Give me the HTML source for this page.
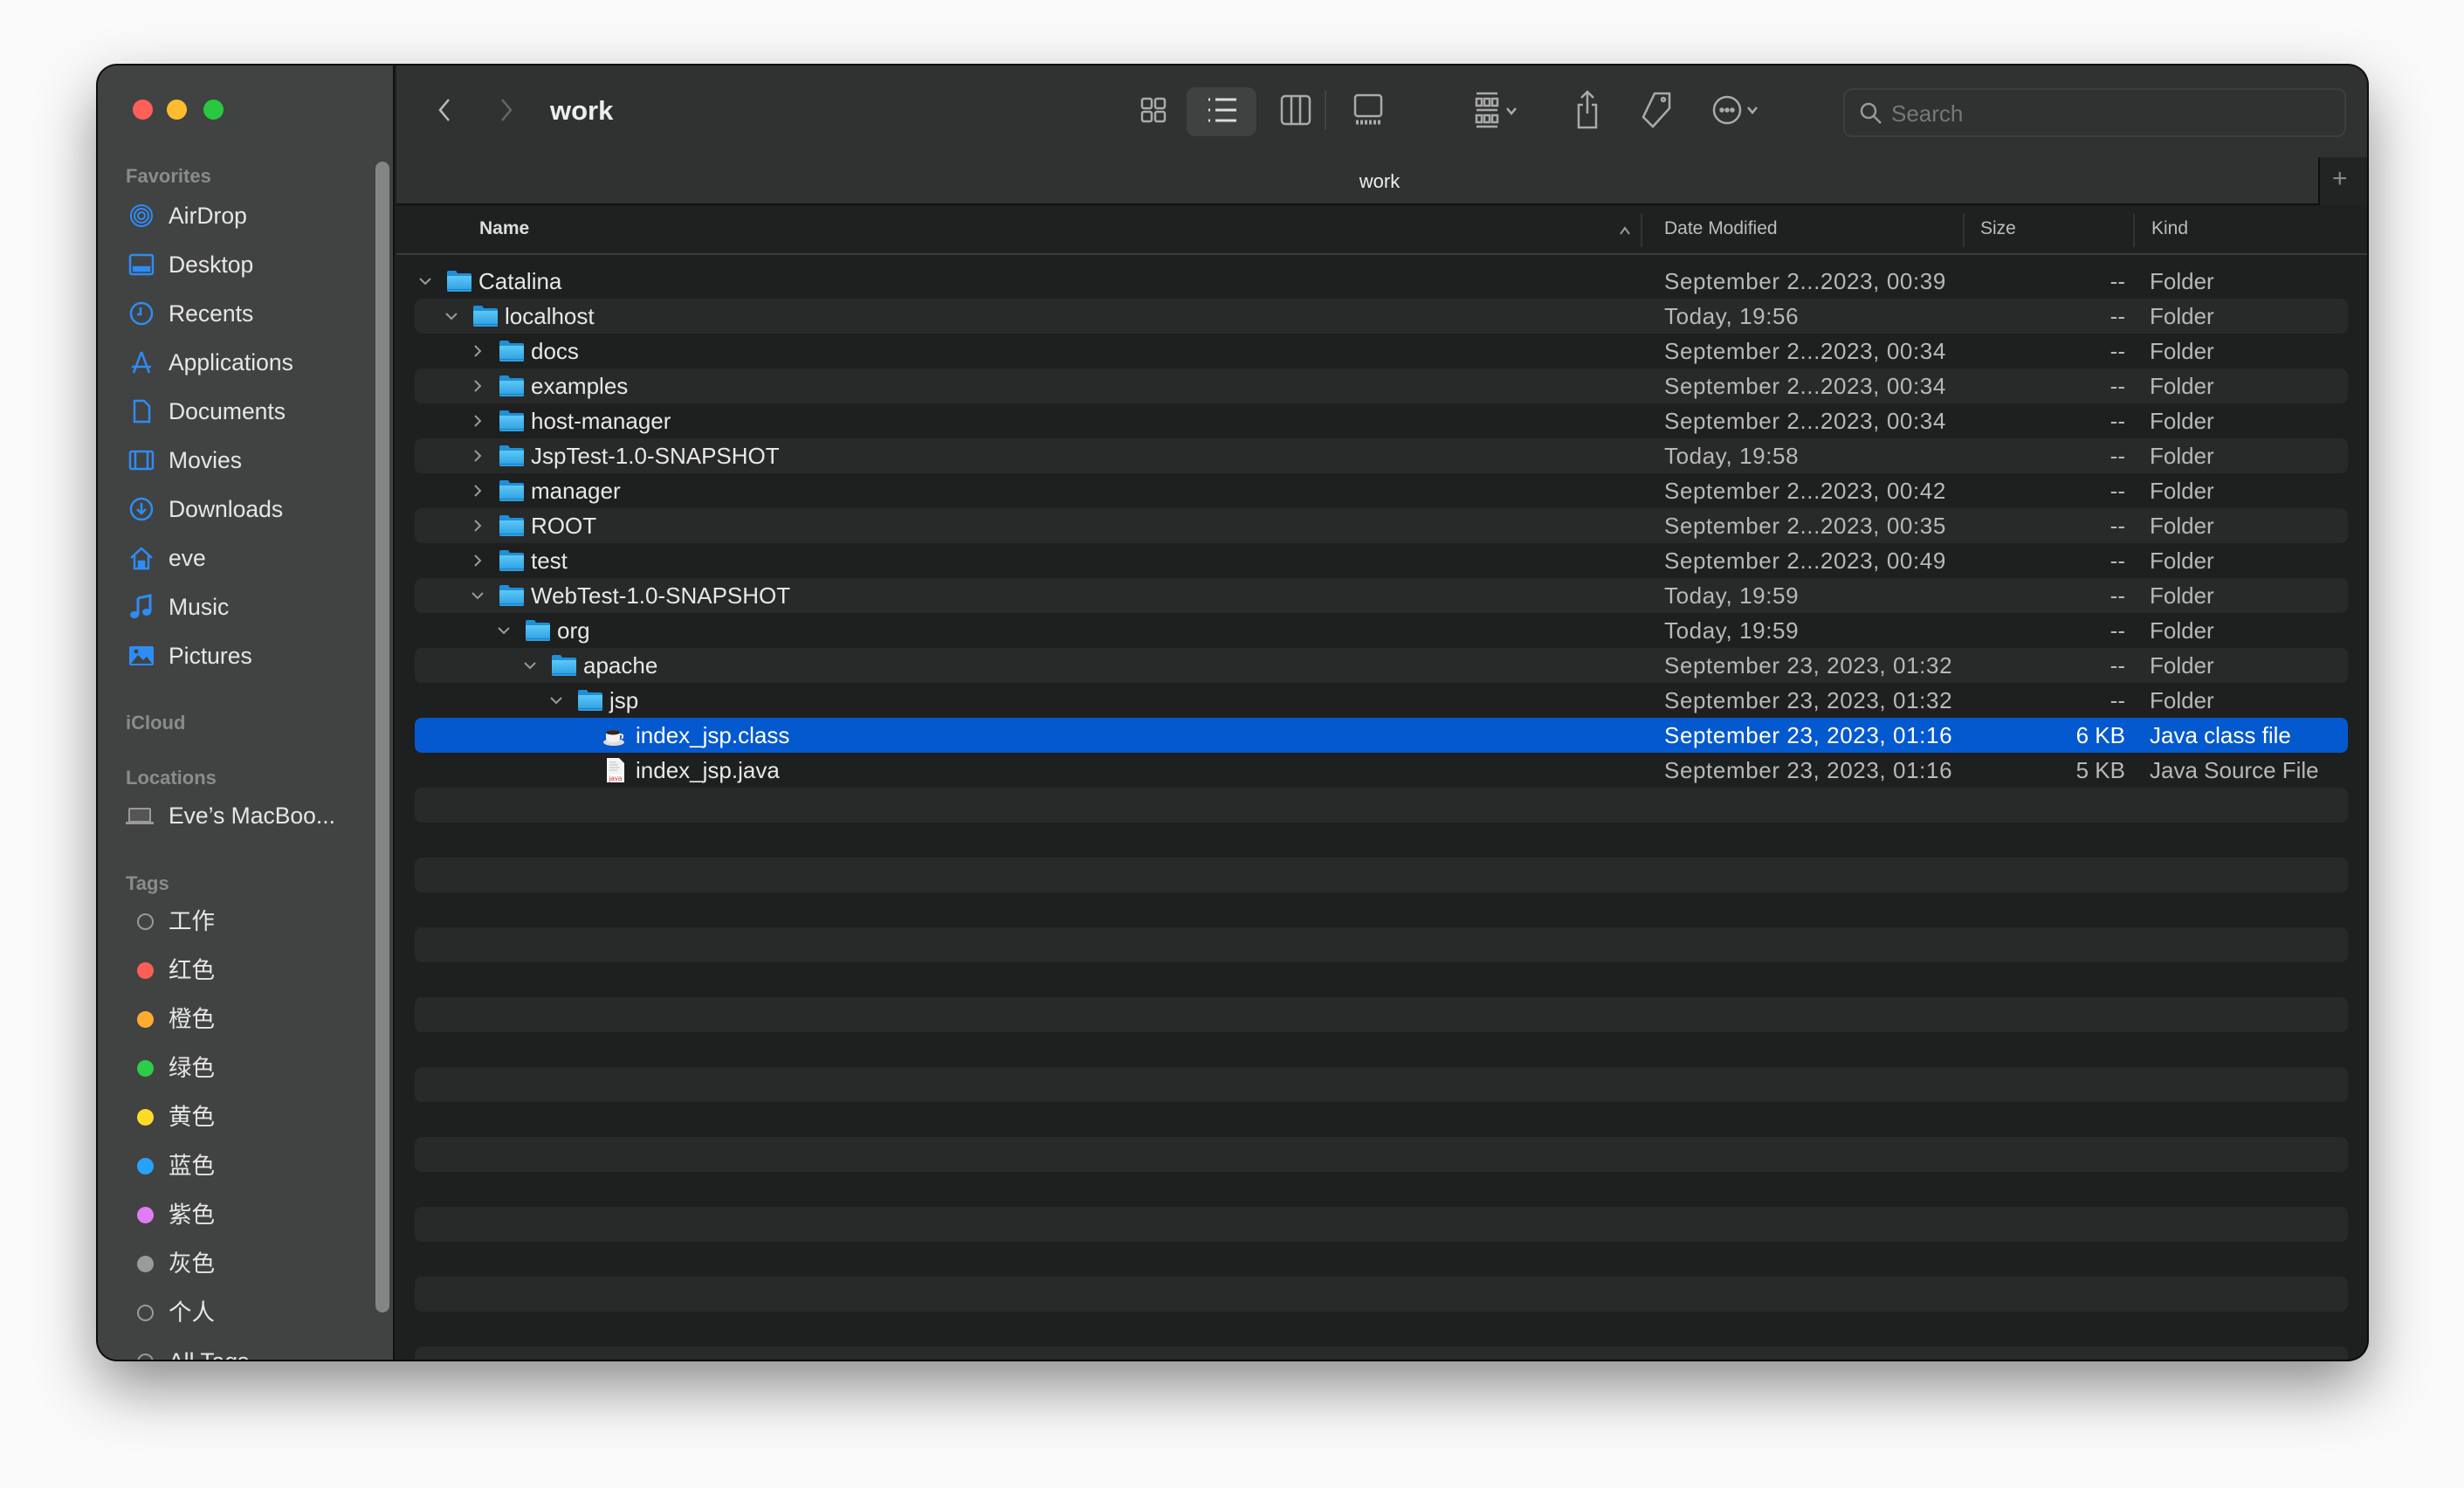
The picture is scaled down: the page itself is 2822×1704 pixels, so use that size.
<!DOCTYPE html>
<html><head><meta charset="utf-8"><style>
*{margin:0;padding:0;box-sizing:border-box}
body{width:2822px;height:1704px;background:#fafafa;position:relative;overflow:hidden;font-family:"Liberation Sans","Noto Sans CJK SC",sans-serif}
.win{position:absolute;left:112px;top:75px;width:2599px;height:1482px;border-radius:22px;overflow:hidden;background:#1e1f1f;box-shadow:0 30px 70px rgba(0,0,0,.45),0 0 0 2px #111}
.side{position:absolute;left:0;top:0;width:340px;height:100%;background:#414242;border-right:2px solid #111}
.abs{position:absolute}
.tl{position:absolute;top:39px;width:23px;height:23px;border-radius:50%}
.sh{position:absolute;left:32px;font-size:22px;color:#8a8b8b;font-weight:bold}
.si{position:absolute;left:81px;font-size:26.5px;color:#e6e6e6;height:40px;line-height:40px;white-space:nowrap}
.sic{position:absolute;left:35px;width:30px;height:30px}
.dot{position:absolute;left:45px;width:19px;height:19px;border-radius:50%}
.main{position:absolute;left:342px;top:0;right:0;bottom:0}
.tb{position:absolute;left:0;top:0;right:0;height:160px;background:#303131;border-bottom:2px solid #111}
.hdr{position:absolute;left:0;top:162px;right:0;height:55px;background:#1f2020;border-bottom:2px solid #3a3b3b;font-size:21px;color:#bdbdbd}
.row{position:absolute;left:21px;width:2214px;height:40px;border-radius:8px;font-size:26px;color:#dcdcdc;line-height:40px;white-space:nowrap}
.st{background:#282929}
.sel{background:#0559cf;color:#fff}
.row span{position:absolute}
.nm{color:#e8e8e8}
.dt{left:1431px;color:#b8b8b8;letter-spacing:0.6px}
.sz{right:255px;color:#b8b8b8}
.kd{left:1987px;color:#b8b8b8}
.sel .dt,.sel .sz,.sel .kd,.sel .nm{color:#fff}
.chev{position:absolute;top:12px;width:16px;height:16px}
.fold{position:absolute;top:7px;width:30px;height:26px}
</style></head><body>
<svg width="0" height="0" style="position:absolute"><defs>
<linearGradient id="fg" x1="0" y1="0" x2="0" y2="1"><stop offset="0" stop-color="#5cc8f7"/><stop offset="1" stop-color="#2a9ce0"/></linearGradient>
<symbol id="folder" viewBox="0 0 30 26"><path d="M1 3 Q1 1 3 1 H11 L13 4 H27 Q29 4 29 6 V24 Q29 25 27 25 H3 Q1 25 1 23Z" fill="#1f8fd6"/><path d="M1 7 H29 V23 Q29 25 27 25 H3 Q1 25 1 23Z" fill="url(#fg)"/><rect x="1" y="22" width="28" height="1" fill="#1b7fc0"/></symbol>
<symbol id="cr" viewBox="0 0 16 16"><path d="M5 2 L11 8 L5 14" fill="none" stroke="#9a9a9a" stroke-width="2"/></symbol>
<symbol id="cd" viewBox="0 0 16 16"><path d="M2 5 L8 11 L14 5" fill="none" stroke="#9a9a9a" stroke-width="2"/></symbol>
</defs></svg>
<div class="win">
<div class="side">
<div class="tl" style="left:40px;background:#fe5f57"></div>
<div class="tl" style="left:79px;background:#febc2e"></div>
<div class="tl" style="left:121px;background:#28c840"></div>
<div class="abs" style="left:318px;top:110px;width:16px;height:1318px;border-radius:8px;background:#848585"></div>
<div class="sh" style="top:114px">Favorites</div>
<svg class="sic" style="top:157px" viewBox="0 0 30 30" fill="none" stroke="#2f8cf4" stroke-width="2"><circle cx="15" cy="15" r="12"/><circle cx="15" cy="15" r="8"/><circle cx="15" cy="15" r="4"/></svg><div class="si" style="top:152px">AirDrop</div>
<svg class="sic" style="top:213px" viewBox="0 0 30 30" fill="none" stroke="#2f8cf4" stroke-width="2.5"><rect x="2" y="4" width="26" height="22" rx="2"/><rect x="6" y="18" width="18" height="4" fill="#2f8cf4"/></svg><div class="si" style="top:208px">Desktop</div>
<svg class="sic" style="top:269px" viewBox="0 0 30 30" fill="none" stroke="#2f8cf4" stroke-width="2.5"><circle cx="15" cy="15" r="12"/><path d="M14 8 V16 H10"/></svg><div class="si" style="top:264px">Recents</div>
<svg class="sic" style="top:325px" viewBox="0 0 30 30" fill="none" stroke="#2f8cf4" stroke-width="2.5"><path d="M15 3 L6 27 M15 3 L24 27 M4 20 H26"/></svg><div class="si" style="top:320px">Applications</div>
<svg class="sic" style="top:381px" viewBox="0 0 30 30" fill="none" stroke="#2f8cf4" stroke-width="2.5"><path d="M7 3 H18 L24 9 V27 H7Z"/></svg><div class="si" style="top:376px">Documents</div>
<svg class="sic" style="top:437px" viewBox="0 0 30 30" fill="none" stroke="#2f8cf4" stroke-width="2.5"><rect x="2" y="5" width="26" height="20" rx="2"/><path d="M8 5 V25 M22 5 V25"/></svg><div class="si" style="top:432px">Movies</div>
<svg class="sic" style="top:493px" viewBox="0 0 30 30" fill="none" stroke="#2f8cf4" stroke-width="2.5"><circle cx="15" cy="15" r="12"/><path d="M15 8 V20 M10 15 L15 20 L20 15"/></svg><div class="si" style="top:488px">Downloads</div>
<svg class="sic" style="top:549px" viewBox="0 0 30 30" fill="none" stroke="#2f8cf4" stroke-width="2.5"><path d="M3 15 L15 4 L27 15 M7 12 V27 H23 V12"/><rect x="12" y="19" width="6" height="8" fill="#2f8cf4"/></svg><div class="si" style="top:544px">eve</div>
<svg class="sic" style="top:605px" viewBox="0 0 30 30" fill="#2f8cf4"><path d="M11 5 L25 2 V21" stroke="#2f8cf4" stroke-width="3" fill="none"/><path d="M11 5 V24" stroke="#2f8cf4" stroke-width="3"/><ellipse cx="7" cy="24" rx="5" ry="4"/><ellipse cx="21" cy="21" rx="5" ry="4"/></svg><div class="si" style="top:600px">Music</div>
<svg class="sic" style="top:661px" viewBox="0 0 30 30"><rect x="1" y="4" width="28" height="22" rx="2" fill="#2f8cf4"/><path d="M3 24 L11 14 L17 20 L21 16 L27 24Z" fill="#414242"/><circle cx="9" cy="10" r="2.5" fill="#414242"/></svg><div class="si" style="top:656px">Pictures</div>
<div class="sh" style="top:740px">iCloud</div>
<div class="sh" style="top:803px">Locations</div>
<svg class="sic" style="top:844px;left:30px;width:36px" viewBox="0 0 36 30"><rect x="6" y="7" width="24" height="15" rx="1" fill="#555" stroke="#999" stroke-width="2"/><rect x="2" y="22" width="32" height="3" fill="#999"/></svg><div class="si" style="top:839px">Eve’s MacBoo...</div>
<div class="sh" style="top:924px">Tags</div>
<div class="dot" style="top:971px;border:2px solid #999"></div><div class="si" style="top:960px">工作</div>
<div class="dot" style="top:1027px;background:#fe5e55"></div><div class="si" style="top:1016px">红色</div>
<div class="dot" style="top:1083px;background:#feab2f"></div><div class="si" style="top:1072px">橙色</div>
<div class="dot" style="top:1139px;background:#2dcc4b"></div><div class="si" style="top:1128px">绿色</div>
<div class="dot" style="top:1195px;background:#fedb26"></div><div class="si" style="top:1184px">黄色</div>
<div class="dot" style="top:1251px;background:#26a2fe"></div><div class="si" style="top:1240px">蓝色</div>
<div class="dot" style="top:1307px;background:#e27cf6"></div><div class="si" style="top:1296px">紫色</div>
<div class="dot" style="top:1363px;background:#9a9a9e"></div><div class="si" style="top:1352px">灰色</div>
<div class="dot" style="top:1419px;border:2px solid #999"></div><div class="si" style="top:1408px">个人</div>
<div class="dot" style="top:1475px;border:2px solid #999"></div><div class="si" style="top:1464px">All Tags...</div>
</div>
<div class="main">
<div class="tb">
<svg class="abs" style="left:44px;top:36px" width="22" height="30" viewBox="0 0 22 30"><path d="M16 3 L6 15 L16 27" fill="none" stroke="#bbb" stroke-width="2.5"/></svg>
<svg class="abs" style="left:115px;top:36px" width="22" height="30" viewBox="0 0 22 30"><path d="M6 3 L16 15 L6 27" fill="none" stroke="#666" stroke-width="2.5"/></svg>
<div class="abs" style="left:176px;top:34px;font-size:31px;font-weight:bold;color:#eee">work</div>
<svg class="abs" style="left:850px;top:34px" width="34" height="34" viewBox="0 0 34 34" fill="none" stroke="#aaa" stroke-width="2.5"><rect x="4" y="4" width="11" height="11" rx="2"/><rect x="19" y="4" width="11" height="11" rx="2"/><rect x="4" y="19" width="11" height="11" rx="2"/><rect x="19" y="19" width="11" height="11" rx="2"/></svg>
<div class="abs" style="left:905px;top:25px;width:80px;height:56px;border-radius:10px;background:#404141"></div>
<svg class="abs" style="left:926px;top:33px" width="40" height="36" viewBox="0 0 40 36" stroke="#ddd" stroke-width="3"><path d="M4 6 H6 M4 18 H6 M4 30 H6 M12 6 H36 M12 18 H36 M12 30 H36"/></svg>
<svg class="abs" style="left:1011px;top:31px" width="38" height="40" viewBox="0 0 38 40" fill="none" stroke="#aaa" stroke-width="2.5"><rect x="3" y="4" width="32" height="32" rx="4"/><path d="M14 4 V36 M24 4 V36"/></svg>
<div class="abs" style="left:1063px;top:29px;width:2px;height:44px;background:#444"></div>
<svg class="abs" style="left:1093px;top:31px" width="40" height="40" viewBox="0 0 40 40" fill="none" stroke="#aaa" stroke-width="2.5"><rect x="5" y="3" width="30" height="24" rx="3"/><path d="M6 34 H34" stroke-dasharray="3 2" stroke-width="5"/></svg>
<svg class="abs" style="left:1235px;top:29px" width="60" height="44" viewBox="0 0 60 44" fill="none" stroke="#aaa" stroke-width="2.5"><path d="M2 3 H26 M2 22 H26 M2 41 H26"/><rect x="2" y="9" width="6" height="8"/><rect x="11" y="9" width="6" height="8"/><rect x="20" y="9" width="6" height="8"/><rect x="2" y="28" width="6" height="8"/><rect x="11" y="28" width="6" height="8"/><rect x="20" y="28" width="6" height="8"/><path d="M37 20 L42 26 L47 20"/></svg>
<svg class="abs" style="left:1349px;top:27px" width="30" height="48" viewBox="0 0 30 48" fill="none" stroke="#aaa" stroke-width="2.5"><path d="M15 3 V28 M8 10 L15 3 L22 10 M10 18 H5 V44 H25 V18 H20"/></svg>
<svg class="abs" style="left:1425px;top:29px" width="36" height="44" viewBox="0 0 36 44" fill="none" stroke="#aaa" stroke-width="2.5"><path d="M16 3 L33 3 L33 20 L14 41 L3 30Z"/><circle cx="26" cy="10" r="2"/></svg>
<svg class="abs" style="left:1507px;top:29px" width="60" height="44" viewBox="0 0 60 44" fill="none" stroke="#aaa" stroke-width="2.5"><circle cx="17" cy="22" r="15"/><circle cx="11" cy="22" r="1.5" fill="#aaa"/><circle cx="17" cy="22" r="1.5" fill="#aaa"/><circle cx="23" cy="22" r="1.5" fill="#aaa"/><path d="M41 19 L46 25 L51 19"/></svg>
<div class="abs" style="left:1657px;top:26px;width:576px;height:56px;border-radius:10px;border:2px solid #3d3e3e;background:#303131"></div>
<svg class="abs" style="left:1674px;top:40px" width="30" height="30" viewBox="0 0 30 30" fill="none" stroke="#999" stroke-width="2.5"><circle cx="12" cy="12" r="8"/><path d="M18 18 L26 26"/></svg>
<div class="abs" style="left:1712px;top:40px;font-size:26px;color:#777">Search</div>
<div class="abs" style="left:25px;top:120px;width:2202px;text-align:center;font-size:22px;color:#eee">work</div>
<div class="abs" style="left:2201px;top:105px;width:56px;height:55px;background:#222323;border-left:2px solid #111"></div>
<div class="abs" style="left:2217px;top:113px;font-size:30px;color:#888">+</div>
</div>
<div class="hdr">
<div class="abs" style="left:95px;top:13px;color:#ddd;font-weight:bold">Name</div>
<svg class="abs" style="left:1399px;top:20px" width="16" height="14" viewBox="0 0 16 14"><path d="M3 11 L8 4 L13 11" fill="none" stroke="#999" stroke-width="2"/></svg>
<div class="abs" style="left:1425px;top:8px;width:2px;height:38px;background:#333"></div>
<div class="abs" style="left:1452px;top:13px">Date Modified</div>
<div class="abs" style="left:1794px;top:8px;width:2px;height:38px;background:#333"></div>
<div class="abs" style="left:1814px;top:13px">Size</div>
<div class="abs" style="left:1989px;top:8px;width:2px;height:38px;background:#333"></div>
<div class="abs" style="left:2010px;top:13px">Kind</div>
</div>

<div class="row" style="top:227px"><svg class="chev" style="left:4px"><use href="#cd"/></svg><svg class="fold" style="left:36px"><use href="#folder"/></svg><span class="nm" style="left:73px">Catalina</span><span class="dt">September 2...2023, 00:39</span><span class="sz">--</span><span class="kd">Folder</span></div>
<div class="row st" style="top:267px"><svg class="chev" style="left:34px"><use href="#cd"/></svg><svg class="fold" style="left:66px"><use href="#folder"/></svg><span class="nm" style="left:103px">localhost</span><span class="dt">Today, 19:56</span><span class="sz">--</span><span class="kd">Folder</span></div>
<div class="row" style="top:307px"><svg class="chev" style="left:64px"><use href="#cr"/></svg><svg class="fold" style="left:96px"><use href="#folder"/></svg><span class="nm" style="left:133px">docs</span><span class="dt">September 2...2023, 00:34</span><span class="sz">--</span><span class="kd">Folder</span></div>
<div class="row st" style="top:347px"><svg class="chev" style="left:64px"><use href="#cr"/></svg><svg class="fold" style="left:96px"><use href="#folder"/></svg><span class="nm" style="left:133px">examples</span><span class="dt">September 2...2023, 00:34</span><span class="sz">--</span><span class="kd">Folder</span></div>
<div class="row" style="top:387px"><svg class="chev" style="left:64px"><use href="#cr"/></svg><svg class="fold" style="left:96px"><use href="#folder"/></svg><span class="nm" style="left:133px">host-manager</span><span class="dt">September 2...2023, 00:34</span><span class="sz">--</span><span class="kd">Folder</span></div>
<div class="row st" style="top:427px"><svg class="chev" style="left:64px"><use href="#cr"/></svg><svg class="fold" style="left:96px"><use href="#folder"/></svg><span class="nm" style="left:133px">JspTest-1.0-SNAPSHOT</span><span class="dt">Today, 19:58</span><span class="sz">--</span><span class="kd">Folder</span></div>
<div class="row" style="top:467px"><svg class="chev" style="left:64px"><use href="#cr"/></svg><svg class="fold" style="left:96px"><use href="#folder"/></svg><span class="nm" style="left:133px">manager</span><span class="dt">September 2...2023, 00:42</span><span class="sz">--</span><span class="kd">Folder</span></div>
<div class="row st" style="top:507px"><svg class="chev" style="left:64px"><use href="#cr"/></svg><svg class="fold" style="left:96px"><use href="#folder"/></svg><span class="nm" style="left:133px">ROOT</span><span class="dt">September 2...2023, 00:35</span><span class="sz">--</span><span class="kd">Folder</span></div>
<div class="row" style="top:547px"><svg class="chev" style="left:64px"><use href="#cr"/></svg><svg class="fold" style="left:96px"><use href="#folder"/></svg><span class="nm" style="left:133px">test</span><span class="dt">September 2...2023, 00:49</span><span class="sz">--</span><span class="kd">Folder</span></div>
<div class="row st" style="top:587px"><svg class="chev" style="left:64px"><use href="#cd"/></svg><svg class="fold" style="left:96px"><use href="#folder"/></svg><span class="nm" style="left:133px">WebTest-1.0-SNAPSHOT</span><span class="dt">Today, 19:59</span><span class="sz">--</span><span class="kd">Folder</span></div>
<div class="row" style="top:627px"><svg class="chev" style="left:94px"><use href="#cd"/></svg><svg class="fold" style="left:126px"><use href="#folder"/></svg><span class="nm" style="left:163px">org</span><span class="dt">Today, 19:59</span><span class="sz">--</span><span class="kd">Folder</span></div>
<div class="row st" style="top:667px"><svg class="chev" style="left:124px"><use href="#cd"/></svg><svg class="fold" style="left:156px"><use href="#folder"/></svg><span class="nm" style="left:193px">apache</span><span class="dt">September 23, 2023, 01:32</span><span class="sz">--</span><span class="kd">Folder</span></div>
<div class="row" style="top:707px"><svg class="chev" style="left:154px"><use href="#cd"/></svg><svg class="fold" style="left:186px"><use href="#folder"/></svg><span class="nm" style="left:223px">jsp</span><span class="dt">September 23, 2023, 01:32</span><span class="sz">--</span><span class="kd">Folder</span></div>
<div class="row sel" style="top:747px"><svg class="fold" style="left:215px;top:9px;width:26px;height:24px" viewBox="0 0 26 24"><ellipse cx="13" cy="19" rx="12" ry="4" fill="#ddd"/><path d="M4 8 H20 V14 Q20 19 12 19 Q4 19 4 14Z" fill="#f2f2f2"/><ellipse cx="12" cy="8" rx="8" ry="2.5" fill="#3a2414"/><path d="M20 10 Q25 10 22 15" fill="none" stroke="#eee" stroke-width="2"/></svg><span class="nm" style="left:253px">index_jsp.class</span><span class="dt">September 23, 2023, 01:16</span><span class="sz">6 KB</span><span class="kd">Java class file</span></div>
<div class="row" style="top:787px"><svg class="fold" style="left:219px;top:5px;width:22px;height:30px" viewBox="0 0 22 30"><path d="M1 1 H15 L21 7 V29 H1Z" fill="#f4f4f4"/><path d="M4 6 H12 M4 9 H14 M4 12 H16 M4 15 H13" stroke="#bbb" stroke-width="1"/><rect x="2" y="20" width="18" height="8" fill="#fff"/><text x="11" y="27" font-size="8" fill="#c33" text-anchor="middle" font-family="Liberation Sans">java</text></svg><span class="nm" style="left:253px">index_jsp.java</span><span class="dt">September 23, 2023, 01:16</span><span class="sz">5 KB</span><span class="kd">Java Source File</span></div>
<div class="row st" style="top:827px"></div>
<div class="row st" style="top:907px"></div>
<div class="row st" style="top:987px"></div>
<div class="row st" style="top:1067px"></div>
<div class="row st" style="top:1147px"></div>
<div class="row st" style="top:1227px"></div>
<div class="row st" style="top:1307px"></div>
<div class="row st" style="top:1387px"></div>
<div class="row st" style="top:1467px"></div>
</div>
</div>
</body></html>
